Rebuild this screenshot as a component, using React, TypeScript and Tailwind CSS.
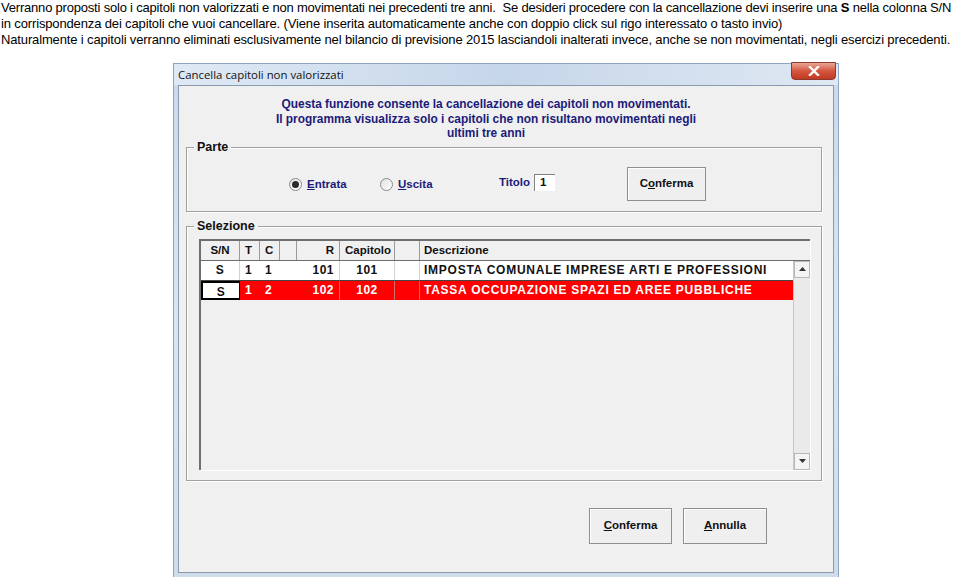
import React from "react";

const tah = { fontFamily: '"Liberation Sans", Arial, sans-serif' };

function GroupBox({ label, className, children }: { label: string; className?: string; children?: React.ReactNode }) {
  return (
    <div className={"relative " + (className ?? "")}>
      <div className="absolute inset-0 border border-[#a0a0a0] shadow-[inset_1px_1px_0_#fff,1px_1px_0_#fff]" />
      <div className="absolute left-[8px] top-[-8px] bg-[#f0f0f0] px-[3px] text-[12.5px] font-bold leading-[16px] text-[#111]">
        {label}
      </div>
      {children}
    </div>
  );
}

function Btn({ label, u, className }: { label: string; u: number; className?: string }) {
  return (
    <div className={"flex items-center justify-center border border-[#8f8f8f] bg-[#efefef] text-[11.5px] font-bold text-[#111] shadow-[inset_1px_1px_0_#fff] " + (className ?? "")}>
      <span>
        {label.slice(0, u)}
        <span className="underline">{label[u]}</span>
        {label.slice(u + 1)}
      </span>
    </div>
  );
}

const cols = [39, 20, 20, 17, 43, 55, 25];

function Row({ cells, sel, head }: { cells: string[]; sel?: boolean; head?: boolean }) {
  const base = head ? "bg-[#f0f0f0] text-[#111]" : sel ? "bg-[#ff0000] text-white" : "bg-white text-[#111]";
  return (
    <div className={"flex h-[19px] font-bold leading-[19px] " + (head ? "text-[11.5px] " : "text-[12px] tracking-[0.5px] ") + base}>
      {cols.map((w, i) => {
        let align = "justify-start pl-[5px]";
        if (i === 0) align = "justify-center";
        if (i === 4) align = "justify-end pr-[5px]";
        if (i === 5) align = head ? "justify-start pl-[5px]" : "justify-center";
        const isSN = i === 0 && sel;
        return (
          <div
            key={i}
            style={{ width: w }}
            className={
              "flex shrink-0 " +
              align +
              (head ? " border-r border-[#9a9a9a]" : i === 0 || i === 4 || i === 5 || i === 6 ? " border-r border-[#b5b5b5]/60" : "") +
              (isSN ? " border-[2px] border-black bg-white text-[#111]" : "")
            }
          >
            {cells[i]}
          </div>
        );
      })}
      <div className={"flex-1 pl-[4px] " + (head ? "" : "tracking-[0.75px]")}>{cells[7]}</div>
    </div>
  );
}

export default function App() {
  return (
    <div className="h-[577px] w-[960px] overflow-hidden bg-white">
      <div
        className="whitespace-nowrap pl-[1px] text-[13px] tracking-[-0.14px] text-black"
        style={{ fontFamily: '"Liberation Sans", Arial, sans-serif' }}
      >
        <div className="h-[15px] leading-[15px] tracking-[-0.2px]">
          Verranno proposti solo i capitoli non valorizzati e non movimentati nei precedenti tre anni.&nbsp; Se desideri procedere con la cancellazione devi inserire una <b>S</b> nella colonna S/N
        </div>
        <div className="h-[17px] leading-[17px]">
          in corrispondenza dei capitoli che vuoi cancellare. (Viene inserita automaticamente anche con doppio click sul rigo interessato o tasto invio)
        </div>
        <div className="h-[16px] leading-[16px]">
          Naturalmente i capitoli verranno eliminati esclusivamente nel bilancio di previsione 2015 lasciandoli inalterati invece, anche se non movimentati, negli esercizi precedenti.
        </div>
      </div>

      {/* window */}
      <div className="ml-[174px] mt-[16px] flex h-[513px] w-[664px] flex-col bg-gradient-to-b from-[#c9d9ec] via-[#d9e5f2] to-[#cfdceb] shadow-[0_0_0_1px_#8ea4bf]">
        <div className="relative flex h-[21px] shrink-0 items-center bg-gradient-to-r from-[#dfe9f5] via-[#c6d6e9] to-[#dfe8f3] pl-[4px]">
          <span className="text-[11.4px] text-[#111]" style={{ fontFamily: '"Open Sans", "Noto Sans", sans-serif' }}>
            Cancella capitoli non valorizzati
          </span>
          <div className="absolute right-[2px] top-[-2px] flex h-[18px] w-[45px] items-center justify-center rounded-b-[4px] border border-[#8b3a2e] bg-gradient-to-b from-[#e8a596] via-[#d4553e] to-[#c13a22]">
            <svg width="12" height="10" viewBox="0 0 12 10">
              <path d="M2 1 L10 9 M10 1 L2 9" stroke="#fff" strokeWidth="2.4" strokeLinecap="square" />
            </svg>
          </div>
        </div>
        <div
          className="mx-[4px] mb-[4px] flex flex-1 flex-col border border-[#8a9bb0] bg-[#f0f0f0]"
          style={tah}
        >
          <div className="ml-[96px] mt-[11px] w-[422px] text-center text-[11.9px] font-bold leading-[14.5px] text-[#1b1b7a]">
            Questa funzione consente la cancellazione dei capitoli non movimentati.
            <br />
            Il programma visualizza solo i capitoli che non risultano movimentati negli
            <br />
            ultimi tre anni
          </div>

          <GroupBox label="Parte" className="ml-[7px] mt-[6px] h-[65px] w-[636px]">
            <div className="absolute left-[103px] top-[29px] flex items-center gap-[5px]">
              <div className="flex h-[13px] w-[13px] items-center justify-center rounded-full border border-[#8a8a8a] bg-gradient-to-br from-[#e6e6e6] to-white">
                <div className="h-[7px] w-[7px] rounded-full bg-[#2a2a2a]" />
              </div>
              <span className="text-[11.5px] font-bold text-[#1b1b7a]">
                <span className="underline">E</span>ntrata
              </span>
            </div>
            <div className="absolute left-[194px] top-[29px] flex items-center gap-[5px]">
              <div className="h-[13px] w-[13px] rounded-full border border-[#8a8a8a] bg-gradient-to-br from-[#e0e0e0] to-white" />
              <span className="text-[11.5px] font-bold text-[#1b1b7a]">
                <span className="underline">U</span>scita
              </span>
            </div>
            <div className="absolute left-[313px] top-[27px] flex items-center gap-[4px]">
              <span className="text-[11.5px] font-bold text-[#1b1b7a]">Titolo</span>
              <div className="h-[17px] w-[21px] border-l border-t border-[#808080] bg-white pl-[5px] text-[11.5px] font-bold leading-[15px] text-[#111]">
                1
              </div>
            </div>
            <Btn label="Conferma" u={1} className="absolute left-[441px] top-[20px] h-[34px] w-[79px]" />
          </GroupBox>

          <GroupBox label="Selezione" className="ml-[7px] mt-[14px] h-[255px] w-[636px]">
            <div className="absolute left-[13px] top-[13px] flex h-[231px] w-[611px] flex-col border-l-[2px] border-t-[2px] border-[#6e6e6e] shadow-[1px_1px_0_#fff]">
              <div className="border-b border-[#6e6e6e] bg-[#f0f0f0]">
                <Row head cells={["S/N", "T", "C", "", "R", "Capitolo", "", "Descrizione"]} />
              </div>
              <div className="flex flex-1">
                <div className="flex flex-1 flex-col">
                  <div className="border-b border-[#444]">
                    <Row cells={["S", "1", "1", "", "101", "101", "", "IMPOSTA COMUNALE IMPRESE ARTI E PROFESSIONI"]} />
                  </div>
                  <Row sel cells={["S", "1", "2", "", "102", "102", "", "TASSA OCCUPAZIONE SPAZI ED AREE PUBBLICHE"]} />
                  <div className="flex-1 bg-[#f0f0f0]" />
                </div>
                <div className="flex w-[17px] flex-col border-l border-[#c8c8c8] bg-[#eaeaea]">
                  <div className="flex h-[17px] items-center justify-center border border-[#b8b8b8] bg-[#f4f4f4]">
                    <svg width="7" height="4" viewBox="0 0 7 4"><path d="M0 4 L3.5 0 L7 4Z" fill="#333" /></svg>
                  </div>
                  <div className="flex-1" />
                  <div className="flex h-[17px] items-center justify-center border border-[#b8b8b8] bg-[#f4f4f4]">
                    <svg width="7" height="4" viewBox="0 0 7 4"><path d="M0 0 L3.5 4 L7 0Z" fill="#333" /></svg>
                  </div>
                </div>
              </div>
            </div>
          </GroupBox>

          <div className="ml-[410px] mt-[27px] flex gap-[11px]">
            <Btn label="Conferma" u={0} className="h-[36px] w-[83px]" />
            <Btn label="Annulla" u={0} className="h-[36px] w-[84px]" />
          </div>
        </div>
      </div>
    </div>
  );
}
